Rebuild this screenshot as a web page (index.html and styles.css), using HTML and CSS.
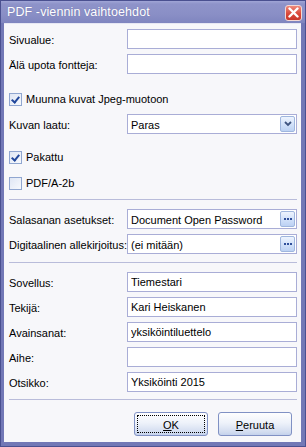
FILE: index.html
```html
<!DOCTYPE html>
<html lang="fi">
<head>
    <meta charset="UTF-8">
    <title>PDF -viennin vaihtoehdot</title>
    <link rel="stylesheet" href="styles.css">
</head>
<body>

<div class="window">
    <div class="titlebar">
        <span class="title">PDF -viennin vaihtoehdot</span>
        <span class="close">
            <svg width="11" height="11" viewBox="0 0 11 11">
                <path d="M1.5 1.5 L9.5 9.5 M9.5 1.5 L1.5 9.5" stroke="#fff" stroke-width="2.4" stroke-linecap="round"/>
            </svg>
        </span>
    </div>

    <div class="content">
        <div class="row">
            <label>Sivualue:</label>
            <input type="text" class="field" value="">
        </div>
        <div class="row">
            <label>Älä upota fontteja:</label>
            <input type="text" class="field" value="">
        </div>

        <div class="check-row gap-big">
            <span class="checkbox checked"></span>
            <span>Muunna kuvat Jpeg-muotoon</span>
        </div>
        <div class="row">
            <label>Kuvan laatu:</label>
            <div class="field combo">
                <span class="combo-text">Paras</span>
                <span class="mini-btn">
                    <svg width="8" height="6" viewBox="0 0 8 6">
                        <path d="M1 1 L4 4 L7 1" fill="none" stroke="#3f5480" stroke-width="1.8"/>
                    </svg>
                </span>
            </div>
        </div>

        <div class="check-row gap-pak">
            <span class="checkbox checked"></span>
            <span>Pakattu</span>
        </div>
        <div class="check-row gap-pdfa">
            <span class="checkbox"></span>
            <span>PDF/A-2b</span>
        </div>

        <div class="separator sep-1"></div>

        <div class="row">
            <label>Salasanan asetukset:</label>
            <div class="field combo">
                <span class="combo-text">Document Open Password</span>
                <span class="mini-btn dots"><i></i><i></i><i></i></span>
            </div>
        </div>
        <div class="row">
            <label>Digitaalinen allekirjoitus:</label>
            <div class="field combo">
                <span class="combo-text">(ei mitään)</span>
                <span class="mini-btn dots"><i></i><i></i><i></i></span>
            </div>
        </div>

        <div class="separator sep-2"></div>

        <div class="row gap-meta">
            <label>Sovellus:</label>
            <input type="text" class="field" value="Tiemestari">
        </div>
        <div class="row">
            <label>Tekijä:</label>
            <input type="text" class="field" value="Kari Heiskanen">
        </div>
        <div class="row">
            <label>Avainsanat:</label>
            <input type="text" class="field" value="yksiköintiluettelo">
        </div>
        <div class="row">
            <label>Aihe:</label>
            <input type="text" class="field" value="">
        </div>
        <div class="row">
            <label>Otsikko:</label>
            <input type="text" class="field" value="Yksiköinti 2015">
        </div>

        <div class="separator sep-3"></div>

        <div class="buttons">
            <button class="btn focused"><span><u>O</u>K</span></button>
            <button class="btn"><span><u>P</u>eruuta</span></button>
        </div>
    </div>
</div>

</body>
</html>
```

FILE: styles.css
```css
body {
    margin: 0;
    font-family: "Liberation Sans", Arial, sans-serif;
    font-size: 11px;
    color: #000;
}
.window {
    width: 306px;
    height: 447px;
    box-sizing: border-box;
    border: 1px solid #4a5090;
    background: #7278b6;
    padding: 0 4px 4px 3px;
    display: flex;
    flex-direction: column;
}
.titlebar {
    height: 22px;
    flex: none;
    display: flex;
    align-items: center;
    justify-content: space-between;
    padding: 0 0 0 3px;
    background: linear-gradient(#a0a5d6 0, #8e93c9 3px, #8a8fc6 60%, #7f85bf 100%);
    margin: 0 -4px 0 -3px;
    padding-left: 6px;
    padding-right: 3px;
}
.title {
    color: #fff;
    font-size: 12.5px;
    letter-spacing: 0.1px;
    text-shadow: 0 0 1px rgba(60, 60, 120, 0.4);
}
.close {
    width: 15px;
    height: 14px;
    border: 1px solid #f4d8d4;
    border-radius: 3px;
    background: linear-gradient(#ee8a7c, #d9483a 55%, #c9372b);
    display: flex;
    align-items: center;
    justify-content: center;
    margin-top: 1px;
}
.content {
    flex: 1;
    background: #f7f7fa;
    border-top: 1px solid #e6e7f3;
    padding: 5px 4px 0 5px;
    display: flex;
    flex-direction: column;
}
.row {
    display: grid;
    grid-template-columns: 118px 170px;
    align-items: center;
    height: 20px;
    margin-bottom: 5px;
}
.row label {
    white-space: nowrap;
    padding-top: 1px;
}
.field {
    box-sizing: border-box;
    height: 20px;
    width: 170px;
    margin: 0;
    border: 1px solid #a9add6;
    background: #fff;
    font-family: "Liberation Sans", Arial, sans-serif;
    font-size: 11px;
    padding: 0 3px;
    color: #000;
    outline: none;
}
.combo {
    display: flex;
    align-items: center;
    justify-content: space-between;
    padding: 0 0 0 3px;
}
.combo-text {
    padding-top: 1px;
}
.mini-btn {
    width: 15px;
    height: 16px;
    box-sizing: border-box;
    border: 1px solid #9fb6de;
    border-radius: 2px;
    background: linear-gradient(#eef4fe, #d3e2fa 50%, #bcd1f3);
    display: flex;
    align-items: center;
    justify-content: center;
    margin-right: 1px;
}
.mini-btn.dots {
    gap: 1px;
}
.mini-btn.dots i {
    width: 2px;
    height: 2px;
    background: #2f4f9a;
}
.check-row {
    display: flex;
    align-items: center;
    height: 20px;
    gap: 4px;
    padding-left: 0;
}
.checkbox {
    width: 11px;
    height: 11px;
    border: 1px solid #90a6d0;
    background: linear-gradient(135deg, #dfe6f4, #f7f9fd);
    flex: none;
    position: relative;
}
.checkbox.checked::after {
    content: '';
    position: absolute;
    left: 3px;
    top: 1px;
    width: 3px;
    height: 6px;
    border: solid #22489c;
    border-width: 0 2px 2px 0;
    transform: rotate(40deg);
}
.gap-big {
    margin-top: 10px;
    margin-bottom: 5px;
}
.gap-pak {
    margin-top: 8px;
}
.gap-pdfa {
    margin-top: 6px;
}
.separator {
    height: 1px;
    width: 288px;
    background: #b9bcda;
}
.sep-1 {
    margin-top: 6px;
    margin-bottom: 9px;
}
.sep-2 {
    margin-top: 3px;
    margin-bottom: 9px;
}
.sep-3 {
    margin-top: 2px;
}
.buttons {
    display: flex;
    justify-content: flex-end;
    gap: 10px;
    margin-top: 12px;
    margin-right: 5px;
}
.btn {
    width: 74px;
    height: 24px;
    box-sizing: border-box;
    border: 1px solid #8091c4;
    border-radius: 3px;
    background: linear-gradient(#fefefe, #eef2fa 45%, #d3ddf0 85%, #c4d2ec);
    font-family: "Liberation Sans", Arial, sans-serif;
    font-size: 11px;
    padding: 2px;
    display: flex;
}
.btn span {
    flex: 1;
    display: flex;
    align-items: center;
    justify-content: center;
    border: 1px dotted transparent;
    padding-top: 1px;
}
.btn.focused span {
    border-color: #000;
}
```
